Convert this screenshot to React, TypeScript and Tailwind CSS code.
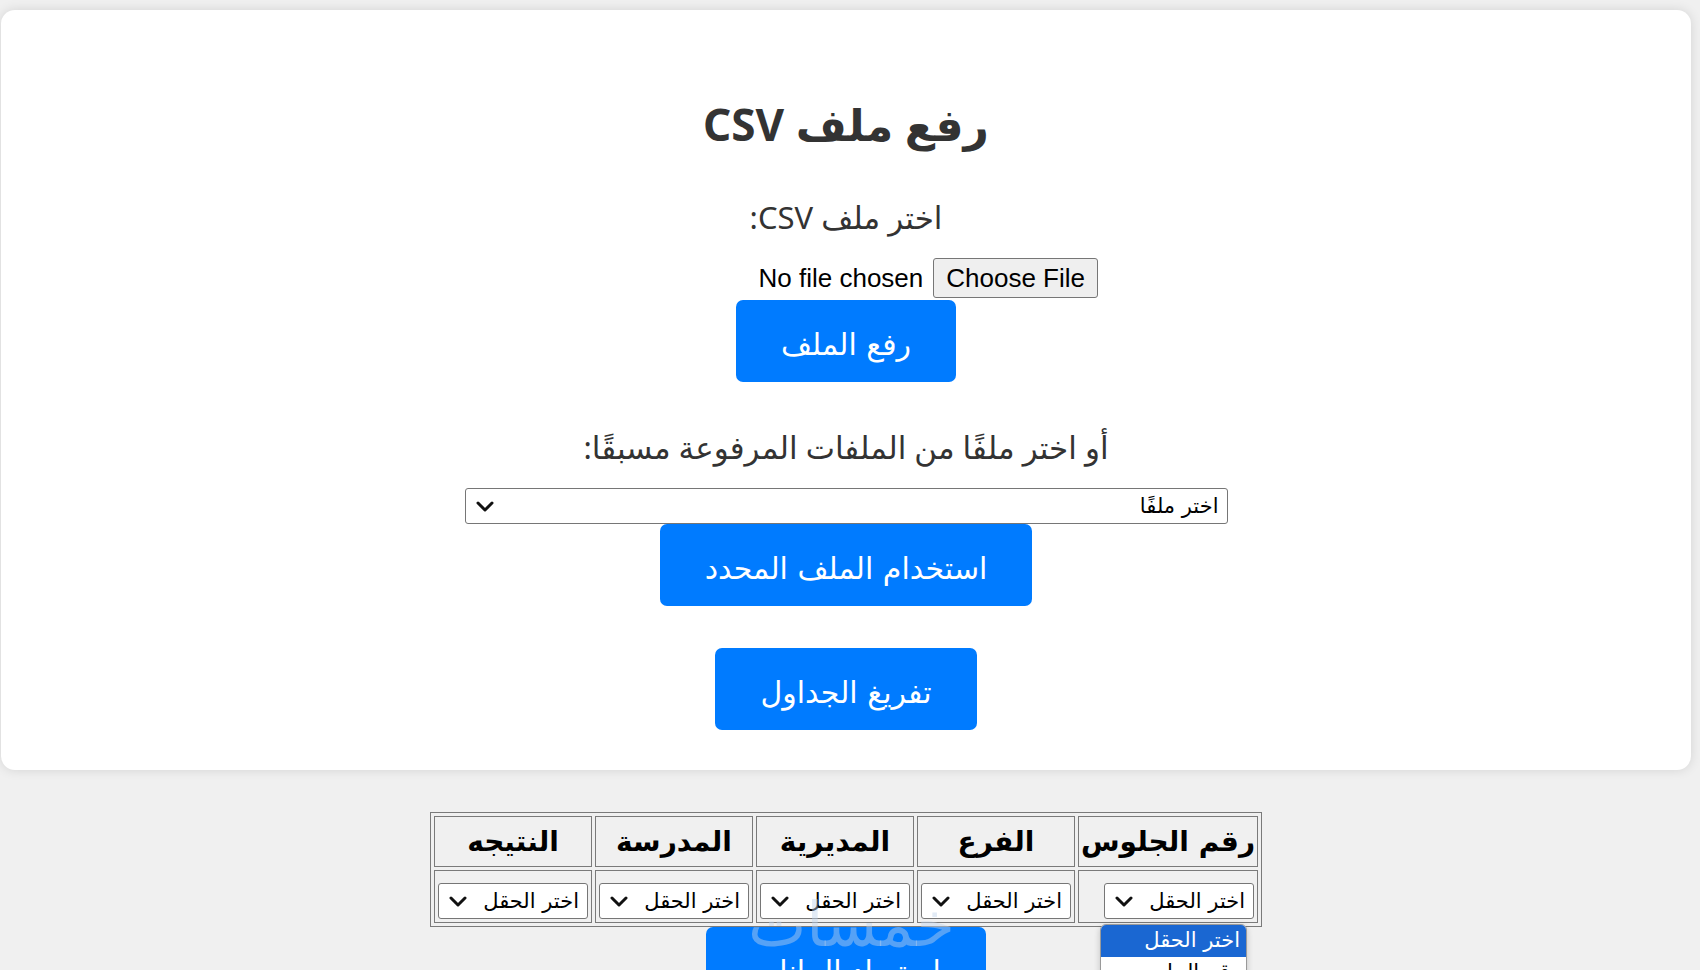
const FIELDS = ['رقم الجلوس', 'الفرع', 'المديرية', 'المدرسة', 'النتيجه']

function Chevron() {
  return (
    <svg width="18" height="11" viewBox="0 0 18 11" className="shrink-0">
      <path d="M2 2 L9 9 L16 2" fill="none" stroke="#111" strokeWidth="3" strokeLinecap="round" strokeLinejoin="round" />
    </svg>
  )
}

function FakeSelect({ label, className }: { label: string; className: string }) {
  return (
    <div className={`flex items-center justify-between bg-white border-[1.5px] border-[#767676] rounded-[3px] pr-[8px] pl-[10px] ${className}`}>
      <span className="text-[21px] leading-none text-black font-['DejaVu_Sans',sans-serif]">{label}</span>
      <Chevron />
    </div>
  )
}

function BlueButton({ children, className = '' }: { children: string; className?: string }) {
  return (
    <button className={`h-[82px] px-[45px] pt-[6px] bg-[#007bff] text-white text-[30px] rounded-[7px] font-['DejaVu_Sans',sans-serif] ${className}`}>
      {children}
    </button>
  )
}

export default function App() {
  return (
    <div className="relative min-h-[970px] h-[970px] overflow-hidden bg-[#f0f0f0] pt-[10px] pl-[1px] pr-[9px]">
      <div dir="rtl" className="bg-white rounded-[14px] shadow-[0_0_12px_rgba(0,0,0,0.12)] flex flex-col items-center text-center pb-[40px] text-[#333]">
        <h1 className="mt-[86px] text-[44px] leading-[56px] font-bold font-['Noto_Sans','DejaVu_Sans',sans-serif]">رفع ملف CSV</h1>

        <label className="mt-[45px] text-[31px] leading-[40px] font-['Noto_Sans','DejaVu_Sans',sans-serif]">اختر ملف CSV:</label>

        <div className="mt-[21px] w-[504px] h-[40px] flex items-center gap-[10px] font-['Liberation_Sans',sans-serif] text-[26px] text-black">
          <button className="h-[40px] px-[12px] bg-[#efefef] border-[1.5px] border-[#767676] rounded-[3px] leading-none">Choose File</button>
          <span dir="ltr">No file chosen</span>
        </div>

        <BlueButton className="mt-[2px]">رفع الملف</BlueButton>

        <label className="mt-[45px] text-[31px] leading-[40px] font-['Noto_Sans','DejaVu_Sans',sans-serif]">أو اختر ملفًا من الملفات المرفوعة مسبقًا:</label>

        <FakeSelect label="اختر ملفًا" className="mt-[21px] w-[763px] h-[36px]" />

        <BlueButton>استخدام الملف المحدد</BlueButton>

        <BlueButton className="mt-[42px]">تفريغ الجداول</BlueButton>
      </div>

      <div dir="rtl" className="flex flex-col items-center mt-[42px]">
        <table className="border-separate border-spacing-[3px] border-[1.5px] border-[#7a7a7a] font-['DejaVu_Sans',sans-serif]">
          <thead>
            <tr>
              {FIELDS.map(f => (
                <th key={f} className="border-[1.5px] border-[#7a7a7a] px-[2px] py-[2px] text-[28px] leading-[45px] font-bold text-black whitespace-nowrap">{f}</th>
              ))}
            </tr>
          </thead>
          <tbody>
            <tr>
              {FIELDS.map(f => (
                <td key={f} className="border-[1.5px] border-[#7a7a7a] px-[3px] pt-[12px] pb-[3px]">
                  <FakeSelect label="اختر الحقل" className="w-[150px] h-[36px]" />
                </td>
              ))}
            </tr>
          </tbody>
        </table>
        <BlueButton>استيراد البيانات</BlueButton>
      </div>

      {/* watermark */}
      <div dir="rtl" className="absolute left-[748px] top-[894px] text-[62px] leading-none font-normal text-[rgba(190,210,235,0.45)] font-['DejaVu_Sans',sans-serif] pointer-events-none">خمسات</div>

      {/* open native dropdown */}
      <div dir="rtl" className="absolute left-[1100px] top-[924px] w-[147px] bg-white border border-[#9a9a9a] rounded-t-[6px] shadow-[0_2px_6px_rgba(0,0,0,0.2)] font-['DejaVu_Sans',sans-serif] text-[21px] text-right">
        <div className="h-[32px] bg-[#1a67d2] text-white rounded-t-[5px] px-[6px] flex items-center">اختر الحقل</div>
        <div className="h-[32px] text-black px-[6px] flex items-center">رقم الجلوس</div>
      </div>
    </div>
  )
}
